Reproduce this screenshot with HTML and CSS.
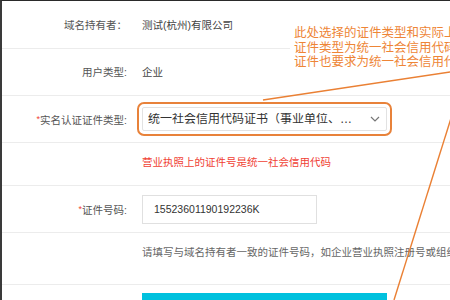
FILE: index.html
```html
<!DOCTYPE html>
<html lang="zh-CN">
<head>
  <meta charset="UTF-8" />
  <meta name="viewport" content="width=device-width, initial-scale=1" />
  <title>实名认证</title>
  <link rel="stylesheet" href="styles.css">
</head>
<body>

  <div class="page">
    <div class="form">
      <!-- 持有者信息 -->
      <div class="row row-owner">
        <div class="label">域名持有者：</div>
        <div class="value">测试(杭州)有限公司</div>
      </div>
      <div class="row row-type">
        <div class="label">用户类型:</div>
        <div class="value">企业</div>
      </div>

      <!-- 证件类型 -->
      <div class="row row-cert">
        <div class="label"><span class="req">*</span>实名认证证件类型:</div>
        <div class="value">
          <div class="select is-marked">
            <span class="select-text">统一社会信用代码证书（事业单位、社会团体等）</span>
            <svg class="chevron" width="10" height="6" viewBox="0 0 10 6">
              <path d="M1 1l4 4 4-4" fill="none" stroke="#777" stroke-width="1.2" />
            </svg>
          </div>
        </div>
      </div>
      <div class="row row-error">
        <div></div>
        <div class="value error">营业执照上的证件号是统一社会信用代码</div>
      </div>

      <!-- 证件号码 -->
      <div class="row row-number">
        <div class="label"><span class="req">*</span>证件号码:</div>
        <div class="value">
          <div class="input">15523601190192236K</div>
        </div>
      </div>
      <div class="row row-hint">
        <div></div>
        <div class="value hint">请填写与域名持有者一致的证件号码，如企业营业执照注册号或组织机构代码</div>
      </div>

      <div class="row row-submit">
        <div></div>
        <div class="value"><button class="btn" aria-label="提交"></button></div>
      </div>
    </div>

    <!-- 标注 -->
    <div class="note">
      此处选择的证件类型和实际上传的证件须一致<br>
      证件类型为统一社会信用代码证书时<br>
      证件也要求为统一社会信用代码证书
    </div>
    <svg class="marks" width="450" height="300" viewBox="0 0 450 300">
      <line x1="263" y1="100" x2="460" y2="70.5" stroke="#ea8034" stroke-width="1.4" />
      <line x1="452" y1="115" x2="394" y2="300" stroke="#ea8034" stroke-width="1.4" />
    </svg>
  </div>

</body>
</html>
```

FILE: styles.css
```css
* {
  margin: 0;
  padding: 0;
  box-sizing: border-box;
}

html, body {
  overflow: hidden;
}

body {
  font-family: "Liberation Sans", "Noto Sans CJK SC", sans-serif;
  background: #fff;
  color: #333;
}

.page {
  position: relative;
  width: 450px;
  height: 300px;
  overflow: hidden;
  border-top: 1px solid #2a2a2a;
  border-left: 2px solid #3a3a3a;
}

/* 表单行 */
.row {
  display: grid;
  grid-template-columns: 125px 1fr;
  column-gap: 15px;
  align-items: center;
  border-bottom: 1px solid #ececec;
  font-size: 10.5px;
  line-height: 12px;
  white-space: nowrap;
}
.row-owner { height: 48px; }
.row-type { height: 47px; }
.row-cert { height: 47px; }
.row-error { height: 43px; padding-bottom: 4px; }
.row-number { height: 47px; }
.row-hint {
  height: 52px;
  align-items: start;
  padding-top: 13px;
}
.row-submit {
  border-bottom: none;
  align-items: start;
  padding-top: 8px;
}

.label {
  text-align: right;
  color: #555;
}
.req {
  color: #f04134;
  font-size: 9px;
  vertical-align: 2px;
}
.value {
  color: #444;
}
.error {
  color: #f04134;
}
.hint {
  color: #666;
}

/* 下拉框 */
.select {
  display: flex;
  align-items: center;
  width: 245px;
  height: 24px;
  padding: 0 6px 0 5px;
  border: 1px solid #e2e2e2;
  border-radius: 2px;
  font-size: 12px;
  color: #333;
}
.select.is-marked {
  outline: 2px solid #e8823a;
  outline-offset: 3px;
}
.select-text {
  width: 206px;
  overflow: hidden;
  text-overflow: ellipsis;
}
.chevron {
  margin-left: auto;
}

/* 输入框 */
.input {
  width: 175px;
  height: 29px;
  padding: 0 11px;
  border: 1px solid #e0e0e0;
  line-height: 27px;
  color: #333;
}

.btn {
  display: block;
  width: 245px;
  height: 32px;
  border: none;
  background-color: #00c1de;
}

/* 标注文字和连线 */
.note {
  position: absolute;
  top: 25px;
  left: 288px;
  padding: 0 4px;
  background: #fff;
  color: #ee8536;
  font-size: 12.5px;
  line-height: 14.5px;
  white-space: nowrap;
}
.marks {
  position: absolute;
  top: -1px;
  left: -2px;
  pointer-events: none;
}
```
